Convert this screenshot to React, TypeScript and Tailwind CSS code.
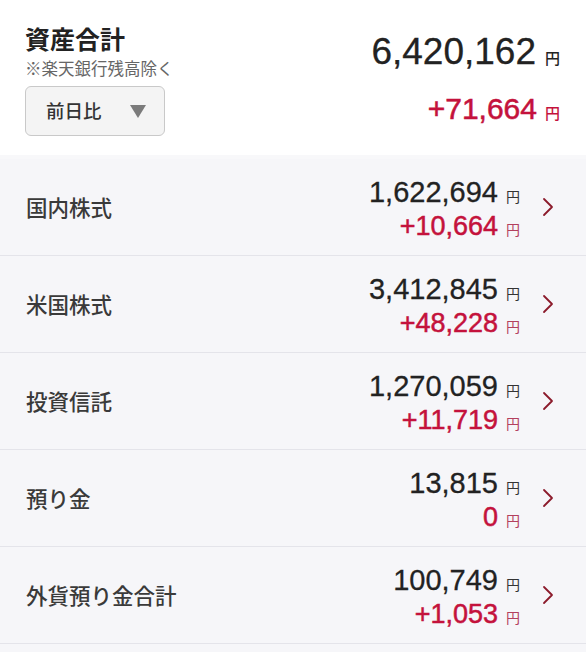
import React from "react";

const JP = "font-['Noto_Sans_CJK_JP',sans-serif]";
const NUM = "font-['Liberation_Sans','Noto_Sans_CJK_JP',sans-serif]";

const rows = [
  { label: "国内株式", value: "1,622,694", diff: "+10,664" },
  { label: "米国株式", value: "3,412,845", diff: "+48,228" },
  { label: "投資信託", value: "1,270,059", diff: "+11,719" },
  { label: "預り金", value: "13,815", diff: "0" },
  { label: "外貨預り金合計", value: "100,749", diff: "+1,053" },
];

function Chevron() {
  return (
    <svg width="12" height="20" viewBox="0 0 12 20" className="block">
      <polyline points="2,2 10,10 2,18" fill="none" stroke="#8b1a2b" strokeWidth="1.8" strokeLinecap="round" strokeLinejoin="round" />
    </svg>
  );
}

export default function App() {
  return (
    <div className={`w-[586px] h-[652px] overflow-hidden bg-[#f6f6f9] ${JP}`}>
      <div className="h-[155px] bg-white flex justify-between pl-[25px] pr-[26px]">
        <div className="flex flex-col pt-[22px]">
          <div className={`text-[25px] leading-[32px] font-bold text-[#222] ${JP}`}>資産合計</div>
          <div className={`text-[16.5px] leading-[24px] mt-[2px] text-[#666] ${JP}`}>※楽天銀行残高除く</div>
          <div className="mt-[6px] w-[140px] h-[50px] rounded-[6px] border border-[#c9c9c9] bg-[#f4f4f4] flex items-center justify-between pl-[20px] pr-[18px]">
            <span className={`text-[18.5px] font-medium text-[#333] ${JP}`}>前日比</span>
            <svg width="16" height="13" viewBox="0 0 16 13">
              <polygon points="0,0 16,0 8,13" fill="#7b7b7b" />
            </svg>
          </div>
        </div>
        <div className="flex flex-col items-end pt-[30px]">
          <div className="flex items-baseline">
            <span className={`${NUM} text-[37px] leading-[44px] text-[#222] [-webkit-text-stroke:0.3px_#222]`}>6,420,162</span>
            <span className={`${JP} text-[15px] font-medium ml-[9px] text-[#222]`}>円</span>
          </div>
          <div className="flex items-baseline mt-[17px]">
            <span className={`${NUM} text-[30px] leading-[36px] text-[#c4123c] [-webkit-text-stroke:0.55px_#c4123c]`}>+71,664</span>
            <span className={`${JP} text-[15px] font-medium ml-[8px] text-[#c4123c]`}>円</span>
          </div>
        </div>
      </div>
      <div className="h-[4px] bg-[#f8f8fa]" />
      {rows.map((r) => (
        <div key={r.label} className="h-[97px] border-b border-[#e4e4ea] flex items-center pl-[26px] pr-[32px]">
          <div className={`flex-1 text-[21.5px] font-medium text-[#3a3a3a] ${JP}`}>{r.label}</div>
          <div className="flex flex-col items-end pt-[4px]">
            <div className="flex items-baseline">
              <span className={`${NUM} text-[29px] leading-[34px] text-[#222] [-webkit-text-stroke:0.3px_#222]`}>{r.value}</span>
              <span className={`${JP} text-[14px] ml-[8px] text-[#333]`}>円</span>
            </div>
            <div className="flex items-baseline">
              <span className={`${NUM} text-[27px] leading-[34px] text-[#c4123c] [-webkit-text-stroke:0.5px_#c4123c]`}>{r.diff}</span>
              <span className={`${JP} text-[14px] ml-[8px] text-[#b3405e]`}>円</span>
            </div>
          </div>
          <div className="ml-[22px]">
            <Chevron />
          </div>
        </div>
      ))}
    </div>
  );
}
